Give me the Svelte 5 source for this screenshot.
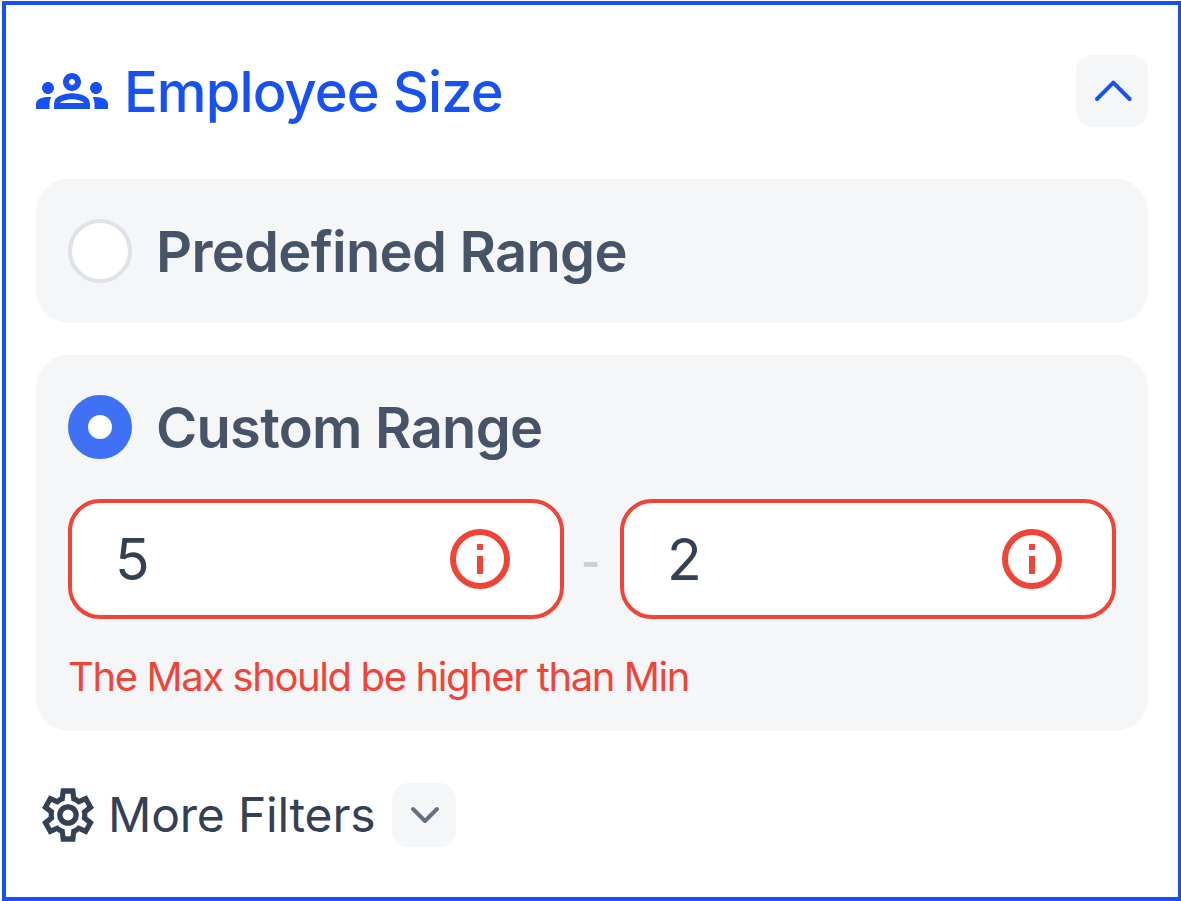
<script lang="ts">
	type RangeMode = "predefined" | "custom";

	let mode: RangeMode = $state("custom");
	let min: string = $state("5");
	let max: string = $state("2");

	const invalid = $derived(Number(max) <= Number(min));
</script>

{#snippet infoIcon()}
	<svg class="info-icon" viewBox="0 0 24 24" aria-hidden="true">
		<circle cx="12" cy="12" r="9" fill="none" stroke="currentColor" stroke-width="2" />
		<path d="M11 7h2v2h-2zM11 11h2v6h-2z" fill="currentColor" />
	</svg>
{/snippet}

<section class="filter-card">
	<header class="card-header">
		<svg class="groups-icon" viewBox="0 0 24 24" fill="currentColor" aria-hidden="true">
			<path
				d="M4 13c1.1 0 2-.9 2-2s-.9-2-2-2-2 .9-2 2 .9 2 2 2zm1.13 1.1C4.76 14.04 4.39 14 4 14c-.99 0-1.93.21-2.78.58A2.01 2.01 0 0 0 0 16.43V18h4.5v-1.61c0-.83.23-1.61.63-2.29zM20 13c1.1 0 2-.9 2-2s-.9-2-2-2-2 .9-2 2 .9 2 2 2zm4 3.43c0-.81-.48-1.53-1.22-1.85A6.95 6.95 0 0 0 20 14c-.39 0-.76.04-1.13.1.4.68.63 1.46.63 2.29V18H24v-1.57zM16.24 13.65c-1.17-.52-2.61-.9-4.24-.9s-3.07.39-4.24.9A2.988 2.988 0 0 0 6 16.39V18h12v-1.61c0-1.18-.68-2.26-1.76-2.74zM8.07 16c.09-.23.13-.39.91-.69.97-.38 1.99-.56 3.02-.56s2.05.18 3.02.56c.77.3.81.46.91.69H8.07zM12 8c.55 0 1 .45 1 1s-.45 1-1 1-1-.45-1-1 .45-1 1-1m0-2c-1.66 0-3 1.34-3 3s1.34 3 3 3 3-1.34 3-3-1.34-3-3-3z" />
		</svg>
		<h2 class="title">Employee Size</h2>
		<button type="button" class="toggle" aria-label="Collapse">
			<svg viewBox="0 0 72 72" aria-hidden="true">
				<path d="M21 44l16.3-16.3L53.6 44" />
			</svg>
		</button>
	</header>

	<div class="options">
		<div class="option">
			<label class="choice">
				<input type="radio" value="predefined" bind:group={mode} />
				<span>Predefined Range</span>
			</label>
		</div>

		<div class="option">
			<label class="choice">
				<input type="radio" value="custom" bind:group={mode} />
				<span>Custom Range</span>
			</label>

			<div class="range">
				<div class="field" class:invalid>
					<input type="text" inputmode="numeric" aria-label="Min" bind:value={min} />
					{#if invalid}{@render infoIcon()}{/if}
				</div>
				<span class="dash">-</span>
				<div class="field" class:invalid>
					<input type="text" inputmode="numeric" aria-label="Max" bind:value={max} />
					{#if invalid}{@render infoIcon()}{/if}
				</div>
			</div>

			{#if invalid}
				<p class="message">The Max should be higher than Min</p>
			{/if}
		</div>
	</div>

	<footer class="more">
		<svg class="gear-icon" viewBox="0 0 24 24" fill="currentColor" aria-hidden="true">
			<path
				transform="translate(.4 0) scale(.967 1)"
				d="m9.25 22l-.4-3.2q-.325-.125-.612-.3t-.563-.375L4.7 19.375l-2.75-4.75l2.575-1.95Q4.5 12.5 4.5 12.338v-.675q0-.163.025-.338L1.95 9.375l2.75-4.75l2.975 1.25q.275-.2.575-.375t.6-.3l.4-3.2h5.5l.4 3.2q.325.125.613.3t.562.375l2.975-1.25l2.75 4.75l-2.575 1.95q.025.175.025.338v.674q0 .163-.05.338l2.575 1.95l-2.75 4.75l-2.95-1.25q-.275.2-.575.375t-.6.3l-.4 3.2zM11 20h1.975l.35-2.65q.775-.2 1.438-.587t1.212-.938l2.475 1.025l.975-1.7l-2.15-1.625q.125-.35.175-.737T17.5 12t-.05-.787t-.175-.738l2.15-1.625l-.975-1.7l-2.475 1.05q-.55-.575-1.212-.962t-1.438-.588L13 4h-1.975l-.35 2.65q-.775.2-1.437.588t-1.213.937L5.55 7.15l-.975 1.7l2.15 1.6q-.125.375-.175.75t-.05.8q0 .4.05.775t.175.75l-2.15 1.625l.975 1.7l2.475-1.05q.55.575 1.213.963t1.437.587z" />
			<circle cx="12" cy="12" r="3.05" fill="none" stroke="currentColor" stroke-width="2" />
		</svg>
		<span class="more-label">More Filters</span>
		<button type="button" class="toggle small" aria-label="Expand">
			<svg viewBox="0 0 64 64" aria-hidden="true">
				<path d="M21 26l12 12 12-12" />
			</svg>
		</button>
	</footer>
</section>

<style>
	:global(body) {
		background: #ffffff;
		overflow: hidden;
	}

	.filter-card {
		box-sizing: border-box;
		width: 1180px;
		height: 900px;
		margin: 1px 0 0 2px;
		padding: 50px 30px;
		border: 4px solid #1751f1;
		background: #ffffff;
		color: #344054;
		font-family: Inter, "Liberation Sans", sans-serif;
	}

	.card-header {
		display: flex;
		align-items: center;
		height: 72px;
		margin-bottom: 52px;
		color: #1751f1;
	}

	.groups-icon {
		width: 72px;
		height: 72px;
		flex: none;
	}

	.title {
		margin: 0 auto 0 16px;
		padding-top: 1px;
		font-size: 56px;
		font-weight: 500;
		line-height: 72px;
		letter-spacing: -0.9px;
		white-space: nowrap;
	}

	.toggle {
		flex: none;
		width: 72px;
		height: 72px;
		padding: 0;
		border: none;
		border-radius: 16px;
		background: #f4f6f8;
		color: #1751f1;
		cursor: pointer;
	}

	.toggle svg {
		display: block;
		width: 100%;
		height: 100%;
		fill: none;
		stroke: currentColor;
		stroke-width: 4;
		stroke-linecap: round;
		stroke-linejoin: round;
	}

	.toggle.small {
		width: 64px;
		height: 64px;
		color: #667085;
	}

	.options {
		display: flex;
		flex-direction: column;
		gap: 32px;
	}

	.option {
		padding: 40px 32px;
		border-radius: 32px;
		background: #f4f6f8;
	}

	.option:last-child {
		padding-bottom: 24px;
	}

	.choice {
		display: flex;
		align-items: center;
		gap: 24px;
		height: 64px;
		color: #475467;
		font-size: 56px;
		font-weight: 600;
		line-height: 64px;
		letter-spacing: -0.72px;
		white-space: nowrap;
	}

	.choice span {
		padding-top: 1px;
	}

	.choice input {
		appearance: none;
		flex: none;
		box-sizing: border-box;
		width: 64px;
		height: 64px;
		margin: 0;
		border: 4px solid #dfe2e7;
		border-radius: 50%;
		background: #ffffff;
	}

	.choice input:checked {
		border: 20px solid #4070f4;
	}

	.range {
		display: flex;
		align-items: center;
		margin-top: 40px;
	}

	.field {
		box-sizing: border-box;
		display: flex;
		align-items: center;
		width: 496px;
		height: 120px;
		padding: 0 44px 0 43px;
		border: 4px solid #d0d5dd;
		border-radius: 32px;
		background: #ffffff;
	}

	.field.invalid {
		border-color: #f04438;
	}

	.field input {
		flex: 1;
		min-width: 0;
		padding: 1px 0 0;
		border: none;
		outline: none;
		background: transparent;
		color: #344054;
		font: inherit;
		font-size: 57px;
		line-height: 80px;
	}

	.info-icon {
		flex: none;
		width: 72px;
		height: 72px;
		color: #f04438;
	}

	.dash {
		box-sizing: border-box;
		width: 56px;
		padding: 4px 3px 0 0;
		color: #c8cfd6;
		font-size: 40px;
		font-weight: 700;
		text-align: center;
	}

	.message {
		margin: 28px 0 0;
		color: #f04438;
		font-size: 40px;
		line-height: 60px;
		letter-spacing: -1.4px;
		white-space: nowrap;
	}

	.more {
		display: flex;
		align-items: center;
		height: 64px;
		margin-top: 52px;
	}

	.gear-icon {
		flex: none;
		width: 64px;
		height: 64px;
	}

	.more-label {
		width: 268px;
		margin: 0 16px 0 8px;
		font-size: 48px;
		line-height: 64px;
		letter-spacing: -0.2px;
		white-space: nowrap;
	}
</style>
